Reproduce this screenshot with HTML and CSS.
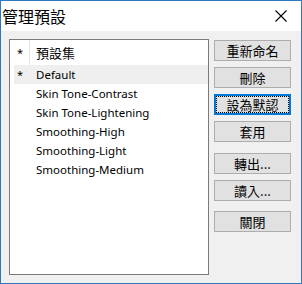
FILE: index.html
```html
<!DOCTYPE html>
<html>
<head>
<meta charset="utf-8">
<link rel="stylesheet" href="styles.css">
</head>
<body>
<div class="window">
  <div class="titlebar">
    <span class="title">管理預設</span>
    <svg class="close" width="12" height="12" viewBox="0 0 12 12"><path d="M0.5 0.5 L11.5 11.5 M11.5 0.5 L0.5 11.5" stroke="#000" stroke-width="1.1" fill="none"/></svg>
  </div>
  <div class="content">
    <div class="list">
      <div class="header">
        <span class="mark">*</span>
        <span class="sep"></span>
        <span class="htext">預設集</span>
      </div>
      <div class="row selected"><span class="mark">*</span><span class="name">Default</span></div>
      <div class="row"><span class="mark"></span><span class="name">Skin Tone-Contrast</span></div>
      <div class="row"><span class="mark"></span><span class="name">Skin Tone-Lightening</span></div>
      <div class="row"><span class="mark"></span><span class="name">Smoothing-High</span></div>
      <div class="row"><span class="mark"></span><span class="name">Smoothing-Light</span></div>
      <div class="row"><span class="mark"></span><span class="name">Smoothing-Medium</span></div>
    </div>
    <div class="buttons">
      <div class="group">
        <button class="btn">重新命名</button>
        <button class="btn">刪除</button>
        <button class="btn focused"><span class="focus">設為默認</span></button>
        <button class="btn">套用</button>
      </div>
      <div class="group g2">
        <button class="btn">轉出...</button>
        <button class="btn">讀入...</button>
      </div>
      <div class="group g3">
        <button class="btn">關閉</button>
      </div>
    </div>
  </div>
</div>
</body>
</html>
```

FILE: styles.css
```css
html, body {
  margin: 0;
  padding: 0;
}
body {
  width: 302px;
  height: 284px;
  overflow: hidden;
  font-family: "Noto Sans", "Noto Sans CJK TC", sans-serif;
}
.window {
  box-sizing: border-box;
  width: 302px;
  height: 284px;
  border: 1px solid #2e78c0;
  background: #f0f0f0;
  display: flex;
  flex-direction: column;
}
.titlebar {
  height: 30px;
  background: #fff;
  display: flex;
  align-items: center;
  justify-content: space-between;
  padding: 0 14px 0 1px;
}
.title {
  font-family: "Noto Sans CJK TC", sans-serif;
  font-size: 16px;
  color: #000;
  line-height: 30px;
  margin-top: -1px;
}
.close {
  display: block;
}
.content {
  flex: 1;
  display: flex;
  padding: 8px 0 0 8px;
}
.list {
  box-sizing: border-box;
  width: 200px;
  height: 236px;
  border: 1px solid #7a7a7a;
  background: #fff;
  display: flex;
  flex-direction: column;
}
.header {
  height: 25px;
  display: flex;
  align-items: center;
  font-family: "Noto Sans CJK TC", sans-serif;
  font-size: 13px;
  color: #000;
}
.header .mark {
  width: 19px;
  padding-left: 7px;
  box-sizing: border-box;
  font-family: "Noto Sans", sans-serif;
  font-size: 11px;
}
.sep {
  width: 1px;
  height: 25px;
  background: #e5e5e5;
  align-self: flex-start;
}
.htext {
  padding-left: 6px;
}
.row {
  height: 19px;
  margin-left: 4px;
  display: flex;
  align-items: center;
  font-size: 11.5px;
  color: #000;
}
.row.selected {
  background: #efefef;
}
.row .mark {
  width: 22px;
  padding-left: 3px;
  box-sizing: border-box;
  font-size: 11px;
}
.name {
  white-space: nowrap;
}
.buttons {
  margin-left: 5px;
  padding-top: 1px;
  display: flex;
  flex-direction: column;
}
.group {
  display: flex;
  flex-direction: column;
  gap: 6px;
}
.g2 {
  margin-top: 11px;
}
.g3 {
  margin-top: 10px;
}
.btn {
  box-sizing: border-box;
  width: 77px;
  height: 21px;
  border: 1px solid #adadad;
  background: #e1e1e1;
  font-family: "Noto Sans CJK TC", sans-serif;
  font-size: 13px;
  color: #000;
  padding: 0;
  margin: 0;
  display: flex;
  align-items: center;
  justify-content: center;
  line-height: 1;
}
.btn.focused {
  border: 2px solid #0078d7;
}
.focus {
  box-sizing: border-box;
  width: 100%;
  height: 100%;
  border: 1px dotted #000;
  display: flex;
  align-items: center;
  justify-content: center;
}
```
